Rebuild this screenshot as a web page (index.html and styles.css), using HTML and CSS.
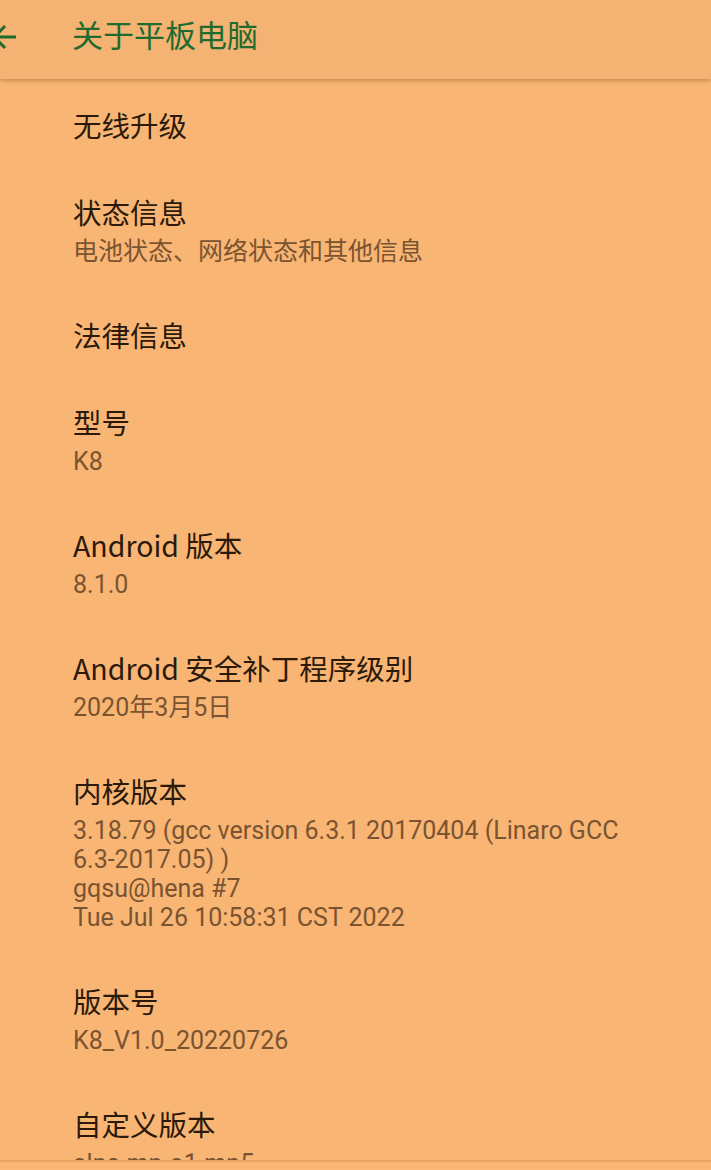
FILE: index.html
```html
<!DOCTYPE html>
<html lang="zh-CN">
<head>
<meta charset="utf-8">
<link rel="stylesheet" href="styles.css">
</head>
<body>
<header class="appbar">
  <svg class="back" width="36" height="36" viewBox="0 0 24 24"><path d="M20 11H7.83l5.59-5.59L12 4l-8 8 8 8 1.41-1.41L7.83 13H20v-2z" fill="#1f6b2e"/></svg>
  <h1 class="title">关于平板电脑</h1>
</header>
<main class="list">
  <div class="item"><div class="t">无线升级</div></div>
  <div class="item"><div class="t">状态信息</div><div class="s">电池状态、网络状态和其他信息</div></div>
  <div class="item"><div class="t">法律信息</div></div>
  <div class="item"><div class="t">型号</div><div class="s">K8</div></div>
  <div class="item"><div class="t">Android 版本</div><div class="s">8.1.0</div></div>
  <div class="item"><div class="t">Android 安全补丁程序级别</div><div class="s">2020年3月5日</div></div>
  <div class="item"><div class="t">内核版本</div><div class="s">3.18.79 (gcc version 6.3.1 20170404 (Linaro GCC<br>6.3-2017.05) )<br>gqsu@hena #7<br>Tue Jul 26 10:58:31 CST 2022</div></div>
  <div class="item"><div class="t">版本号</div><div class="s">K8_V1.0_20220726</div></div>
  <div class="item"><div class="t">自定义版本</div><div class="s">alps-mp-o1.mp5</div></div>
</main>
<div class="navstrip"></div>
</body>
</html>
```
FILE: styles.css
```css
html, body {
  margin: 0;
  padding: 0;
  height: 100%;
  overflow: hidden;
}
body {
  background: #f9b574;
  font-family: Roboto, "Noto Sans CJK SC", sans-serif;
}
.appbar {
  position: relative;
  z-index: 2;
  height: 79px;
  background: #f4b273;
  box-shadow: 0 2px 4px rgba(120, 70, 20, 0.35);
  display: flex;
  align-items: center;
}
.back {
  position: absolute;
  left: -14px;
  top: 19px;
}
.title {
  margin: 0 0 12px 72px;
  font-family: "Noto Sans CJK SC", sans-serif;
  font-weight: 400;
  font-size: 31px;
  line-height: 40px;
  color: #1f6b2e;
}
.list {
  padding-top: 2px;
}
.item {
  padding: 28px 40px 28px 73px;
}
.t {
  font-family: "Noto Sans CJK SC", sans-serif;
  font-size: 28.5px;
  line-height: 31px;
  color: #2b1a0b;
}
.s {
  margin-top: 10px;
  margin-bottom: -3px;
  font-family: Roboto, "Noto Sans CJK SC", sans-serif;
  font-size: 25px;
  line-height: 29px;
  color: #7a5431;
}
.navstrip {
  position: fixed;
  left: 0;
  right: 0;
  bottom: 0;
  height: 8px;
  background: #fbb676;
  border-top: 2px solid #e6a468;
}
```
